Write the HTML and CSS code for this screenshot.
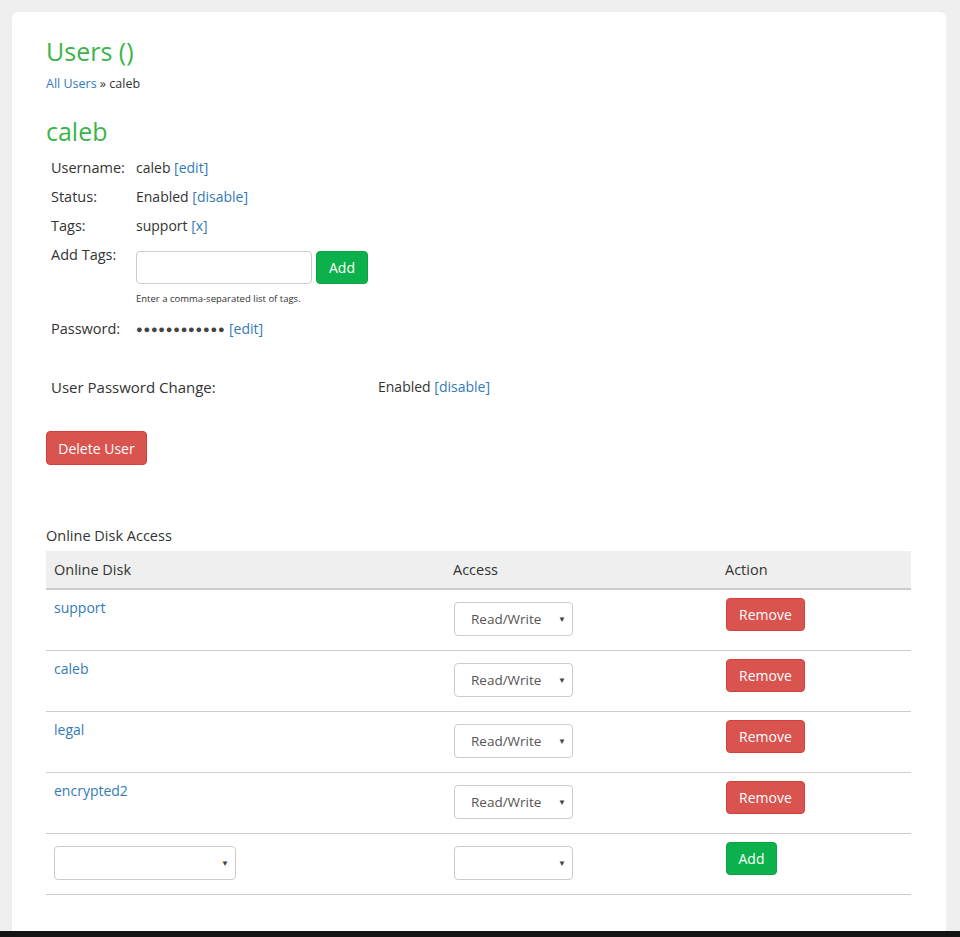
FILE: index.html
```html
<!DOCTYPE html>
<html>
<head>
<meta charset="utf-8">
<link rel="stylesheet" href="styles.css">
</head>
<body>
<div class="page">
  <div class="card">
    <h1 class="title">Users ()</h1>
    <div class="crumbs"><a href="#">All Users</a> » caleb</div>
    <h2 class="title user">caleb</h2>
    <div class="info">
      <div class="lbl">Username:</div>
      <div class="val">caleb <a href="#">[edit]</a></div>
      <div class="lbl">Status:</div>
      <div class="val">Enabled <a href="#">[disable]</a></div>
      <div class="lbl">Tags:</div>
      <div class="val">support <a href="#">[x]</a></div>
      <div class="lbl">Add Tags:</div>
      <div class="val tagform">
        <div class="tagrow">
          <input class="txt" type="text">
          <button class="btn green">Add</button>
        </div>
        <div class="help">Enter a comma-separated list of tags.</div>
      </div>
      <div class="lbl">Password:</div>
      <div class="val"><span class="dots">●●●●●●●●●●●●</span> <a href="#">[edit]</a></div>
    </div>
    <div class="pwchange">
      <div class="lbl">User Password Change:</div>
      <div class="val">Enabled <a href="#">[disable]</a></div>
    </div>
    <button class="btn red big">Delete User</button>
    <div class="caption">Online Disk Access</div>
    <table class="disks">
      <thead>
        <tr><th class="c1">Online Disk</th><th class="c2">Access</th><th class="c3">Action</th></tr>
      </thead>
      <tbody>
        <tr><td><a href="#">support</a></td><td><div class="sel rw">Read/Write<span class="arr">▼</span></div></td><td><button class="btn red act">Remove</button></td></tr>
        <tr><td><a href="#">caleb</a></td><td><div class="sel rw">Read/Write<span class="arr">▼</span></div></td><td><button class="btn red act">Remove</button></td></tr>
        <tr><td><a href="#">legal</a></td><td><div class="sel rw">Read/Write<span class="arr">▼</span></div></td><td><button class="btn red act">Remove</button></td></tr>
        <tr><td><a href="#">encrypted2</a></td><td><div class="sel rw">Read/Write<span class="arr">▼</span></div></td><td><button class="btn red act">Remove</button></td></tr>
        <tr><td><div class="sel wide"><span class="arr">▼</span></div></td><td><div class="sel rw"><span class="arr">▼</span></div></td><td><button class="btn green narrow act">Add</button></td></tr>
      </tbody>
    </table>
  </div>
  <div class="bar"></div>
</div>
</body>
</html>
```
FILE: styles.css
```css
html, body {
  margin: 0;
  padding: 0;
}
body {
  background: #efefef;
  font-family: "Open Sans", "Liberation Sans", sans-serif;
  font-size: 14px;
  color: #333;
}
a {
  color: #337ab7;
  text-decoration: none;
}
.page {
  height: 937px;
  display: flex;
  flex-direction: column;
  overflow: hidden;
}
.card {
  flex: 1;
  margin: 12px 14px 0 12px;
  background: #fff;
  border-radius: 6px 6px 0 0;
  padding: 25px 35px 0 34px;
}
.bar {
  height: 6px;
  background: #141414;
}
.title {
  margin: 0;
  font-size: 25px;
  line-height: 28px;
  font-weight: 400;
  color: #3cb449;
}
.crumbs {
  margin-top: 10px;
  font-size: 12.5px;
  line-height: 17px;
}
.user {
  margin-top: 25px;
}
.info {
  display: grid;
  grid-template-columns: 85px auto;
  margin-top: 8px;
  padding-left: 5px;
  line-height: 20px;
}
.lbl {
  font-size: 14.5px;
}
.lbl, .val {
  padding: 5px 0 4px;
}
.tagform {
  padding-top: 11px;
}
.tagrow {
  display: flex;
  gap: 4px;
}
.txt {
  box-sizing: border-box;
  width: 176px;
  height: 33px;
  border: 1px solid #ccc;
  border-radius: 4px;
  margin: 0;
}
.help {
  font-size: 9.5px;
  line-height: 12px;
  margin-top: 9px;
  margin-bottom: 5px;
}
.dots {
  font-size: 11px;
  letter-spacing: 0.8px;
  vertical-align: 1px;
  color: #444;
}
.pwchange {
  display: grid;
  grid-template-columns: 327px auto;
  margin-top: 29px;
  padding-left: 5px;
  line-height: 20px;
}
.pwchange .lbl {
  font-size: 15px;
}
.btn {
  font-family: inherit;
  font-size: 14px;
  color: #fff;
  border: 1px solid transparent;
  border-radius: 4px;
  height: 33px;
  padding: 0 12px;
  cursor: pointer;
}
.green {
  background: #0db14b;
  border-color: #0aa443;
}
.red {
  background: #d9534f;
  border-color: #d43f3a;
}
.big {
  display: block;
  height: 34px;
  margin-top: 30px;
  width: 101px;
  padding: 0;
}
.act {
  margin-left: 1px;
}
.narrow {
  width: 51px;
  padding: 0;
}
.caption {
  margin-top: 61px;
  line-height: 20px;
  font-size: 14.5px;
}
.disks {
  margin-top: 5px;
  width: 865px;
  border-collapse: collapse;
}
.disks th {
  background: #efefef;
  text-align: left;
  font-weight: 400;
  font-size: 14.5px;
  height: 37px;
  padding: 0 8px;
  border-bottom: 2px solid #ccc;
  line-height: 20px;
}
.c1 { width: 383px; }
.c2 { width: 256px; }
.disks td {
  height: 61px;
  box-sizing: border-box;
  padding: 8px;
  vertical-align: top;
  border-bottom: 1px solid #ccc;
  line-height: 20px;
}
.sel {
  box-sizing: border-box;
  height: 34px;
  margin-top: 4px;
  border: 1px solid #ccc;
  border-radius: 4px;
  position: relative;
  padding: 0 0 0 16px;
  line-height: 32px;
  font-size: 13.5px;
  color: #555;
}
.rw {
  width: 119px;
  margin-left: 1px;
}
.wide {
  width: 182px;
}
.arr {
  position: absolute;
  right: 6px;
  top: 0;
  font-size: 8px;
  color: #444;
}
```
